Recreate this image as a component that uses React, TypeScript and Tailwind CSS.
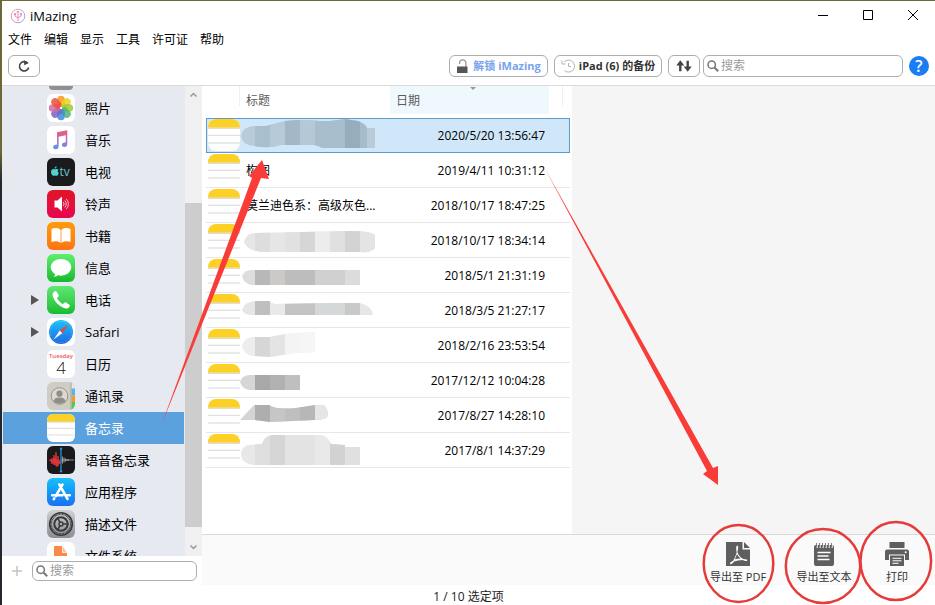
import type { ReactNode } from 'react';

const MENUS = ['文件', '编辑', '显示', '工具', '许可证', '帮助'];

function Tile({ className, children }: { className: string; children?: ReactNode }) {
  return (
    <span className={`block size-7 shrink-0 overflow-hidden rounded-md ${className}`}>
      <svg viewBox="0 0 28 28" className="size-7" aria-hidden="true">
        {children}
      </svg>
    </span>
  );
}

const PETALS = ['#f79a1c', '#e6d322', '#9fc93a', '#4fb573', '#3f8bdb', '#7e60c2', '#d06aa0', '#ee4c3c'];

function PhotosIcon() {
  return (
    <Tile className="bg-white">
      {PETALS.map((fill, i) => (
        <rect
          key={fill}
          x="10.200"
          y="1.800"
          width="7.600"
          height="11.200"
          rx="3.800"
          fill={fill}
          fillOpacity="0.850"
          transform={`rotate(${i * 45} 14 14)`}
        />
      ))}
    </Tile>
  );
}

function MusicIcon() {
  return (
    <Tile className="bg-white">
      <defs>
        <linearGradient id="music" x1="0" y1="0" x2="0" y2="1">
          <stop offset="0" stopColor="#f4586c" />
          <stop offset="0.55" stopColor="#b070cf" />
          <stop offset="1" stopColor="#4d9df0" />
        </linearGradient>
      </defs>
      <path
        d="M10 6.200 20.300 4.200V18a3 3 0 0 1-2.900 3.100c-1.500 0-2.500-.8-2.500-2 0-1.500 1.200-2.300 2.600-2.500l1.300-.3V9.200l-7.200 1.500v9.300a3 3 0 0 1-3 3.200c-1.500 0-2.500-.8-2.500-2 0-1.500 1.200-2.300 2.600-2.500l1.300-.3Z"
        fill="url(#music)"
      />
    </Tile>
  );
}

function TvIcon() {
  return (
    <Tile className="bg-[#1b1b1d]">
      <path
        d="M8.800 11.200c1-.5 2-.3 2.700.5-1.100.8-1 2.500.3 3.200-.5 1.500-1.300 2.900-2.300 2.900-.6 0-.9-.3-1.500-.3s-1 .3-1.500.3C5.200 17.800 4 15.700 4 14c0-2 1.300-3.100 2.700-3.100.7 0 1.300.4 2.100.3ZM7.700 10.600c0-1.300.8-2.200 1.900-2.400.1 1.300-.8 2.300-1.900 2.400Z"
        fill="#4fd3cf"
      />
      <text x="12.500" y="18" fontSize="12" fontFamily="Open Sans" fontWeight="500" fill="#5fc6c9">
        tv
      </text>
    </Tile>
  );
}

function RingtoneIcon() {
  return (
    <Tile className="bg-linear-to-b from-[#e11423] to-[#e8064f]">
      <path d="M7.500 10.500h3l4.500-4v15l-4.500-4h-3Z" fill="#fff" />
      <g fill="none" stroke="#fff" strokeWidth="0.900" strokeOpacity="0.800">
        <path d="M16.300 12a3 3 0 0 1 0 4" />
        <path d="M17.800 10.500a5 5 0 0 1 0 7" />
        <path d="M19.300 9a7 7 0 0 1 0 10" />
      </g>
    </Tile>
  );
}

function BooksIcon() {
  return (
    <Tile className="bg-linear-to-b from-[#ff9c08] to-[#fb7414]">
      <path
        d="M13.600 8C11.500 5.900 7.500 5.500 4.500 7v13c3-1.200 7-1 9.100 1ZM14.400 8c2.100-2.100 6.100-2.500 9.100-1v13c-3-1.200-7-1-9.100 1Z"
        fill="#fff"
      />
    </Tile>
  );
}

function MessagesIcon() {
  return (
    <Tile className="bg-linear-to-b from-[#5df070] to-[#12b92d]">
      <ellipse cx="14" cy="13.300" rx="10.300" ry="8.400" fill="#fff" />
      <path d="M8.500 18.500c0 1.800-.7 3.200-2 4.300 2.200 0 4-.8 5.200-2.200Z" fill="#fff" />
    </Tile>
  );
}

function PhoneIcon() {
  return (
    <Tile className="bg-linear-to-b from-[#5fe873] to-[#11bc2f]">
      <path
        d="M7.200 5.600c1-.9 1.900-.6 2.600.4l1.600 2.500c.6.900.4 1.700-.3 2.400l-.8.9c-.3.400-.3.700 0 1.200 1.300 1.900 2.800 3.500 4.700 4.800.5.300.9.300 1.200 0l.9-.9c.7-.7 1.500-.8 2.400-.2l2.500 1.700c1 .7 1.200 1.600.3 2.500-1.500 1.700-3.300 2-5.500 1.100-5-2.100-8.700-5.800-10.700-10.700-.9-2.300-.6-4.200 1.100-5.700Z"
        fill="#fff"
      />
    </Tile>
  );
}

function SafariIcon() {
  return (
    <Tile className="bg-white">
      <defs>
        <linearGradient id="safari" x1="0" y1="0" x2="0" y2="1">
          <stop offset="0" stopColor="#1bc4fb" />
          <stop offset="1" stopColor="#1d68e4" />
        </linearGradient>
      </defs>
      <circle cx="14" cy="14" r="12" fill="url(#safari)" />
      <circle cx="14" cy="14" r="10.500" fill="none" stroke="#fff" strokeOpacity="0.400" strokeDasharray="0.500 1.200" />
      <path d="M21.500 6.500 12.700 12.600l2.600 2.700Z" fill="#ef4437" />
      <path d="m6.500 21.500 6.200-8.900 2.600 2.700Z" fill="#f6f6f6" />
    </Tile>
  );
}

function CalendarIcon() {
  return (
    <span className="flex size-7 shrink-0 flex-col items-center overflow-hidden rounded-md bg-white" aria-hidden="true">
      <span className="h-2 text-[6px] leading-3 font-semibold text-[#f0525a]">Tuesday</span>
      <span className="text-[17px] leading-5 font-light text-[#222]">4</span>
    </span>
  );
}

function ContactsIcon() {
  return (
    <Tile className="bg-[#cfccc2]">
      <path d="M24.500 0H28v28h-3.500Z" fill="#e8e8e4" />
      <path d="M24.500 6.500H28v7h-3.500Z" fill="#57b6f0" />
      <path d="M24.500 13.500H28v6.500h-3.500Z" fill="#f79a2c" />
      <path d="M24.500 20H28v8h-3.500Z" fill="#4fcb54" />
      <path d="M24 0v28" stroke="#a9a79f" />
      <circle cx="12.500" cy="14" r="8.300" fill="#dcdad2" stroke="#97958c" />
      <circle cx="12.500" cy="11.700" r="3.100" fill="#8f8d86" />
      <path d="M6.500 19c1-3 3.300-3.500 6-3.500s5 .5 6 3.500c-3 3.700-9 3.700-12 0Z" fill="#8f8d86" />
    </Tile>
  );
}

function NotesArt() {
  return (
    <>
      <path d="M0 0h28v7.500H0Z" fill="#fdd025" />
      <path d="M0 8h28" stroke="#c9b26a" strokeWidth="0.600" />
      <path d="M0 14.300h28M0 21h28" stroke="#d8d8d8" strokeWidth="0.900" />
    </>
  );
}

function NotesIcon() {
  return (
    <Tile className="bg-white">
      <NotesArt />
    </Tile>
  );
}

function VoiceIcon() {
  return (
    <Tile className="bg-[#1a1a1c]">
      <path
        d="M2 14h2l1-2 1 4 1-7 1 10 1-13 1 15 1-11 1 7 1-3v4l-1-2-1 4-1-6-1 6-1-8-1 7-1-4-1 3-1-3Z"
        fill="#e6383b"
        stroke="#e6383b"
        strokeWidth="0.700"
      />
      <path d="M15.500 10.500v7M17 11.500v5M18.500 12.500v3M20 13v2M21.500 13.300v1.500" stroke="#a8a8a8" strokeWidth="0.900" />
      <path d="M14 14h13" stroke="#a8a8a8" strokeWidth="0.800" />
      <path d="M14 3v22" stroke="#2b8bd8" strokeWidth="1.300" />
      <circle cx="14" cy="2.800" r="1.200" fill="#2b8bd8" />
      <circle cx="14" cy="25.200" r="1.200" fill="#2b8bd8" />
    </Tile>
  );
}

function AppsIcon() {
  return (
    <Tile className="bg-linear-to-b from-[#1bc0fb] to-[#1c70f1]">
      <g stroke="#fff" strokeWidth="2.600" strokeLinecap="round" fill="none">
        <path d="M15.500 6.500 8.800 18M12.300 6.500 20.500 20.800M5.200 17.200h10.300M19.500 17.200h3.300M7.300 20.300l-.5.900" />
      </g>
    </Tile>
  );
}

function ProfilesIcon() {
  return (
    <Tile className="bg-linear-to-b from-[#d0d1d3] to-[#8b8c90]">
      <g fill="none" stroke="#39393b">
        <circle cx="14" cy="14" r="11.300" strokeWidth="1.600" />
        <circle cx="14" cy="14" r="9.700" strokeWidth="1.300" strokeDasharray="0.900 0.600" />
        <circle cx="14" cy="14" r="6.700" strokeWidth="2" />
        <circle cx="14" cy="14" r="2" strokeWidth="1.400" />
        <path d="M16 14h5.500M13 12.300l-2.800-4.800M13 15.700l-2.800 4.800" strokeWidth="1.500" />
      </g>
    </Tile>
  );
}

function FilesIcon() {
  return (
    <Tile className="bg-white">
      <path d="M7 4h8v7h5v13H7Z" fill="#f98a4a" />
      <path d="M15.500 4 20 10.500h-4.500Z" fill="#f7c3a2" />
    </Tile>
  );
}

const ITEMS: { label: string; icon: ReactNode; expandable?: boolean; selected?: boolean }[] = [
  { label: '照片', icon: <PhotosIcon /> },
  { label: '音乐', icon: <MusicIcon /> },
  { label: '电视', icon: <TvIcon /> },
  { label: '铃声', icon: <RingtoneIcon /> },
  { label: '书籍', icon: <BooksIcon /> },
  { label: '信息', icon: <MessagesIcon /> },
  { label: '电话', icon: <PhoneIcon />, expandable: true },
  { label: 'Safari', icon: <SafariIcon />, expandable: true },
  { label: '日历', icon: <CalendarIcon /> },
  { label: '通讯录', icon: <ContactsIcon /> },
  { label: '备忘录', icon: <NotesIcon />, selected: true },
  { label: '语音备忘录', icon: <VoiceIcon /> },
  { label: '应用程序', icon: <AppsIcon /> },
  { label: '描述文件', icon: <ProfilesIcon /> },
  { label: '文件系统', icon: <FilesIcon /> },
];

/* A redacted title: an outline that clips a strip of flat blocks, each [x, width, colour]. */
type Mosaic = { outline: string; base: string; blocks: [number, number, string][] };

const NOTES: { title?: string; date: string; mosaic?: Mosaic; selected?: boolean }[] = [
  {
    date: '2020/5/20 13:56:47',
    selected: true,
    mosaic: {
      outline: 'M1 18Q2 9 14 8L26 8 45 3Q60 1 80 3L90 3 105 1 118 3Q126 6 127 10L135 10V30H82Q76 26 64 27L40 27Q30 31 14 28 2 27 1 18Z',
      base: '#b9cbd8',
      blocks: [[15, 15, '#a9bfcf'], [30, 15, '#b6cad8'], [45, 15, '#a3b7c6'], [60, 15, '#b4c8d6'], [75, 30, '#a9becd'], [105, 15, '#97adbd'], [120, 7, '#a7bccb']],
    },
  },
  { title: '构图', date: '2019/4/11 10:31:12' },
  { title: '莫兰迪色系：高级灰色...', date: '2018/10/17 18:47:25' },
  {
    date: '2018/10/17 18:34:14',
    mosaic: {
      outline: 'M4 19Q6 10 15 10L110 8Q130 8 135 12V25Q132 30 120 29L30 29Q8 30 4 19Z',
      base: '#e6e6e6',
      blocks: [[15, 15, '#dddddd'], [45, 15, '#e1e1e1'], [60, 15, '#d6d6d6'], [75, 15, '#ececec'], [90, 15, '#e0e0e0'], [105, 15, '#d3d3d3'], [120, 15, '#e4e4e4']],
    },
  },
  {
    date: '2018/5/1 21:31:19',
    mosaic: {
      outline: 'M2 18Q4 12 12 12H120V27H12Q4 26 2 18Z',
      base: '#dddddd',
      blocks: [[15, 15, '#b8b8b8'], [30, 15, '#cbcac6'], [45, 30, '#bdbdbd'], [75, 30, '#d0d0d0'], [105, 15, '#dcdcdc']],
    },
  },
  {
    date: '2018/3/5 21:27:17',
    mosaic: {
      outline: 'M2 17Q4 9 15 8H29L34 11 90 10H120Q132 13 133 22H12Q4 22 2 17Z',
      base: '#e6e6e6',
      blocks: [[15, 15, '#bfbfbf'], [30, 15, '#e9e9e9'], [45, 30, '#c3c3c3'], [75, 30, '#d5d8d9'], [105, 15, '#c9c9c9']],
    },
  },
  {
    date: '2018/2/16 23:53:54',
    mosaic: {
      outline: 'M2 18Q4 10 12 9L30 9 45 6 75 4V24L55 25 30 29 12 28Q4 26 2 18Z',
      base: '#ededed',
      blocks: [[15, 15, '#d6d6d6'], [30, 15, '#e4e4e4'], [45, 15, '#f4f4f4'], [60, 15, '#f6f6f6']],
    },
  },
  {
    date: '2017/12/12 10:04:28',
    mosaic: {
      outline: 'M0 19Q2 12 10 12H60V27H10Q2 26 0 19Z',
      base: '#d6d6d6',
      blocks: [[15, 15, '#a8a8a8'], [30, 15, '#b1b1b1'], [45, 15, '#bfbfbf']],
    },
  },
  {
    date: '2017/8/27 14:28:10',
    mosaic: {
      outline: 'M0 22 14 7H29Q36 12 56 10L75 7H84Q90 14 87 19 84 22 75 22L30 24 15 22Z',
      base: '#d4d4d4',
      blocks: [[15, 15, '#aeaeae'], [30, 15, '#c6c6c6'], [45, 15, '#bfbfbf'], [60, 15, '#b7b7b7'], [75, 15, '#e6e6e6']],
    },
  },
  {
    date: '2017/8/1 14:37:29',
    mosaic: {
      outline: 'M1 22Q1 14 8 12L22 11Q24 3 32 2H80Q88 3 91 11L105 12V14H120V32H15Q2 31 1 22Z',
      base: '#e8e8e8',
      blocks: [[15, 15, '#dedede'], [30, 15, '#d5d5d5'], [45, 30, '#e3e3e3'], [75, 15, '#e9e9e9'], [90, 15, '#d2d2d2'], [105, 15, '#e0e0e0']],
    },
  },
];

function Redacted({ mosaic, id }: { mosaic: Mosaic; id: string }) {
  return (
    <svg viewBox="0 0 150 34" className="block h-[34px] w-[150px]" aria-hidden="true">
      <clipPath id={id}>
        <path d={mosaic.outline} />
      </clipPath>
      <g clipPath={`url(#${id})`} shapeRendering="crispEdges">
        <rect width="150" height="34" fill={mosaic.base} />
        {mosaic.blocks.map(([x, w, fill]) => (
          <rect key={x} x={x} width={w} height="34" fill={fill} />
        ))}
      </g>
    </svg>
  );
}

function SearchGlyph() {
  return (
    <svg viewBox="0 0 12 12" className="size-3 shrink-0" fill="none" stroke="#777" aria-hidden="true">
      <circle cx="4.700" cy="4.700" r="3.700" strokeWidth="1.500" />
      <path d="m7.500 7.500 3.700 3.700" strokeWidth="2" />
    </svg>
  );
}

function SearchBox({ label, className }: { label: string; className: string }) {
  return (
    <label className={`flex items-center gap-0.5 rounded-md border border-[#adadad] bg-white pr-2 pl-[3px] ${className}`}>
      <SearchGlyph />
      <input
        type="text"
        aria-label={label}
        placeholder="搜索"
        className="w-full min-w-0 bg-transparent text-xs leading-4 outline-none placeholder:text-[#9b9b9b]"
      />
    </label>
  );
}

function TitleBar() {
  return (
    <header className="flex h-7 shrink-0 items-center justify-between">
      <div className="flex items-center gap-1 pt-0.5 pl-2">
        <svg viewBox="0 0 16 16" className="size-4" fill="none" aria-hidden="true">
          <defs>
            <linearGradient id="logo" x1="0" y1="0" x2="1" y2="1">
              <stop offset="0" stopColor="#f09ab8" />
              <stop offset="1" stopColor="#8fa6ee" />
            </linearGradient>
          </defs>
          <circle cx="8" cy="8" r="6.800" stroke="url(#logo)" />
          <path d="M8 3.500V13M5 5.500V8l3 2M11 5.500V8l-3 2M6.500 4.500 8 3l1.500 1.500" stroke="#e58bb5" />
          <circle cx="5" cy="6" r="1" fill="#ee7f9f" />
          <circle cx="11" cy="6" r="1" fill="#c58be0" />
        </svg>
        <h1 className="text-[13px] leading-4 text-black">iMazing</h1>
      </div>
      <div className="flex h-full">
        {[
          ['最小化', 'M0 5.500h10'],
          ['最大化', 'M.5.500h9v9h-9Z'],
          ['关闭', 'm0 0 10 10M10 0 0 10'],
        ].map(([name, d]) => (
          <button key={name} type="button" aria-label={name} className="flex h-full w-[45px] items-center justify-center">
            <svg viewBox="0 0 10 10" className="size-2.5" fill="none" stroke="#000" aria-hidden="true">
              <path d={d} />
            </svg>
          </button>
        ))}
      </div>
    </header>
  );
}

const TOOL = 'flex h-[22px] shrink-0 items-center justify-center rounded-md border border-[#adadad] bg-white';

function Toolbar() {
  return (
    <div className="flex shrink-0 items-center gap-1.5 border-b border-[#dcdcdc] pt-1 pr-1.5 pb-2 pl-1.5">
      <button type="button" aria-label="刷新" className={`${TOOL} mr-auto w-8`}>
        <svg viewBox="0 0 14 14" className="size-3.5" fill="none" stroke="#444" strokeWidth="1.600" aria-hidden="true">
          <path d="M10.500 4A4.700 4.700 0 1 0 11.700 8.500" />
          <path d="M7 1.200 11.800 4 7.200 6.300Z" fill="#444" stroke="none" />
        </svg>
      </button>
      <button type="button" className={`${TOOL} w-[99px] gap-1 text-[11px] font-bold text-[#78a3ee]`}>
        <svg viewBox="0 0 13 15" className="h-[15px] w-[13px]" aria-hidden="true">
          <path d="M3.500 5V4a3.200 3.200 0 0 1 6.400 0v4" fill="none" stroke="#999" strokeWidth="1.300" />
          <path d="M1 7.500h10.500V14H1Z" fill="#555" />
        </svg>
        <span className="whitespace-nowrap">解锁 iMazing</span>
      </button>
      <button type="button" className={`${TOOL} w-[108px] gap-1 text-[11px] font-bold text-[#333]`}>
        <svg viewBox="0 0 14 14" className="size-3.5" fill="none" stroke="#b5b5b5" aria-hidden="true">
          <path d="M3 3.200A6 6 0 1 1 3.500 11.500" />
          <path d="M1 1.500v3.500h3.500" />
          <path d="M7.500 4v3.500H10" />
        </svg>
        <span className="whitespace-nowrap">iPad (6) 的备份</span>
      </button>
      <div className="flex items-center gap-[3px]">
        <button type="button" aria-label="传输" className={`${TOOL} w-8`}>
          <svg viewBox="0 0 16 12" className="h-3 w-4" fill="#444" aria-hidden="true">
            <path d="M4.300.300 8.300 5.500H5.500v5.700H3.100V5.500H.300ZM11.700 11.700 7.700 6.500h2.800V.800h2.400v5.700h2.800Z" />
          </svg>
        </button>
        <SearchBox label="搜索备份" className="h-[22px] w-[200px]" />
      </div>
      <button
        type="button"
        aria-label="帮助"
        className="flex size-5 shrink-0 items-center justify-center rounded-full bg-[#1a7df3] text-base leading-5 font-semibold text-white"
      >
        ?
      </button>
    </div>
  );
}

function Sidebar() {
  return (
    <aside className="flex w-[200px] shrink-0 flex-col">
      <div className="flex min-h-0 flex-1">
        <div className="flex-1 overflow-hidden bg-[#e6e9f0]">
          <div className="h-1.5 pl-[47px]">
            <div className="h-1 w-6 rounded-b-md bg-[#8e8e93]" />
          </div>
          <ul>
            {ITEMS.map((item) => (
              <li key={item.label} className="px-px">
                <button
                  type="button"
                  aria-current={item.selected ? 'page' : undefined}
                  className={`flex h-8 w-full items-center text-[13px] leading-5 ${
                    item.selected ? 'bg-[#5ba1de] text-white' : 'text-black'
                  }`}
                >
                  <span className="flex w-11 justify-end pr-2">
                    {item.expandable && (
                      <svg viewBox="0 0 8 10" className="h-2.5 w-2" fill="#555" aria-hidden="true">
                        <path d="M0 0l8 5-8 5Z" />
                      </svg>
                    )}
                  </span>
                  {item.icon}
                  <span className="pl-2.5">{item.label}</span>
                </button>
              </li>
            ))}
          </ul>
        </div>
        <div className="flex w-[17px] flex-col items-center bg-[#f0f0f0]" aria-hidden="true">
          <svg viewBox="0 0 17 17" className="size-[17px] shrink-0" fill="none" stroke="#999" strokeWidth="1.500">
            <path d="m5.500 10.500 3-3 3 3" />
          </svg>
          <div className="flex-[100_1_0%]" />
          <div className="w-full flex-[324_1_0%] bg-[#cdcdcd]" />
          <div className="flex-[12_1_0%]" />
          <svg viewBox="0 0 17 17" className="size-[17px] shrink-0" fill="none" stroke="#999" strokeWidth="1.500">
            <path d="m5.500 6.500 3 3 3-3" />
          </svg>
        </div>
      </div>
      <div className="flex h-[29px] shrink-0 items-center gap-2.5 pr-[5px] pl-[9px]">
        <button type="button" aria-label="添加" className="flex size-[11px] items-center justify-center">
          <svg viewBox="0 0 10 10" className="size-2.5" stroke="#c4c4c4" strokeWidth="1.500" aria-hidden="true">
            <path d="M5 0v10M0 5h10" />
          </svg>
        </button>
        <SearchBox label="搜索侧栏" className="h-5 flex-1" />
      </div>
    </aside>
  );
}

function NoteTable() {
  return (
    <div className="w-[370px] shrink-0 overflow-hidden bg-white pr-0.5 pl-1">
      <table className="w-full table-fixed border-separate border-spacing-0 text-xs">
        <colgroup>
          <col className="w-[34px]" />
          <col className="w-[150px]" />
          <col className="w-[159px]" />
          <col />
        </colgroup>
        <thead>
          <tr className="h-8 text-left align-top leading-[30px] text-[#5c5c5c]">
            <th className="p-0" aria-label="图标">
              <div className="h-5 border-r border-[#f0f0f0]" />
            </th>
            <th className="p-0 pl-1.5 font-normal">标题</th>
            <th className="p-0 font-normal" aria-sort="descending">
              <div className="flex h-7 items-start justify-between bg-[#eff8fc] pl-1.5">
                <span>日期</span>
                <svg viewBox="0 0 6 3" className="mt-px h-[3px] w-1.5" fill="#999" aria-hidden="true">
                  <path d="M0 0h6L3 3Z" />
                </svg>
                <span className="w-6" />
              </div>
            </th>
            <th className="p-0" aria-label="其他">
              <div className="h-5 w-3.5 border-r border-[#f0f0f0]" />
            </th>
          </tr>
        </thead>
        <tbody>
          {NOTES.map((note) => {
            const line = note.selected ? 'border-transparent' : 'border-[#e7e7e7]';
            return (
              <tr
                key={note.date}
                aria-selected={note.selected}
                className={`h-[35px] text-black ${
                  note.selected ? 'bg-[#cfe7f8] outline-1 -outline-offset-1 outline-[#5c9ccc]' : ''
                }`}
              >
                <td className={`border-b p-0 pl-0.5 ${line}`}>
                  <svg viewBox="0 0 28 28" className="block size-8 rounded-lg bg-white" aria-hidden="true">
                    <NotesArt />
                  </svg>
                </td>
                <td className={`border-b p-0 ${line}`}>
                  {note.mosaic ? (
                    <Redacted mosaic={note.mosaic} id={`note-${note.date.replace(/\D/g, '')}`} />
                  ) : (
                    <span className="block truncate pt-0.5 pl-1.5">{note.title}</span>
                  )}
                </td>
                <td className={`border-b p-0 pt-0.5 pr-1 text-right ${line}`}>{note.date}</td>
                <td className={`border-b p-0 ${line}`} />
              </tr>
            );
          })}
        </tbody>
      </table>
    </div>
  );
}

function ExportBar() {
  const button = 'flex flex-col items-center gap-[3px] text-[11px] leading-4 text-[#333]';
  return (
    <div className="flex h-[51px] shrink-0 justify-end border-t border-[#d9d9d9] bg-[#fafafa] pt-[7px] pr-2">
      <button type="button" className={`${button} w-[86px]`}>
        <svg viewBox="0 0 24 24" className="size-6" aria-hidden="true">
          <path d="M0 0h16.500v7.500H24V24H0Z" fill="#5f5f5f" />
          <path d="M18 0v6h6Z" fill="#5f5f5f" />
          <path
            d="M11.300 3.500c1.300 0 1 3.500.1 6.500 1.300 3.500 3.500 6 6 7 3 .3 4 .5 4 1.300 0 1.200-2.500.7-4.700-.4-3.300.2-6 .6-8.700 1.500-1.700 2.500-3.400 3.300-4 2.500-.6-.8 1-2.200 3.200-3.200 1.500-2.500 2.700-5.300 3.500-8.300-.8-3.300-.6-6.900.6-6.900ZM11 12c-.6 2-1.300 3.700-2.200 5.300 1.900-.5 3.800-.8 5.800-.9-1.500-1.200-2.700-2.700-3.600-4.400Z"
            fill="#fff"
          />
        </svg>
        导出至 PDF
      </button>
      <button type="button" className={`${button} w-[86px]`}>
        <svg viewBox="0 0 24 24" className="size-6" aria-hidden="true">
          <rect x="2" y="3" width="20" height="21" rx="2" fill="#5f5f5f" />
          <path d="M5 1v5M8 1v5M11 1v5M14 1v5M17 1v5M20 1v5" stroke="#fafafa" strokeWidth="1.400" />
          <path d="M4.500 1v4.500M7.500 1v4.500M10.500 1v4.500M13.500 1v4.500M16.500 1v4.500M19.500 1v4.500" stroke="#5f5f5f" strokeWidth="0.800" />
          <path d="M5.500 10.500h13M5.500 14h11M5.500 17.500h12" stroke="#fff" strokeWidth="1.300" />
        </svg>
        导出至文本
      </button>
      <button type="button" className={`${button} w-[60px]`}>
        <svg viewBox="0 0 24 24" className="size-6" aria-hidden="true">
          <path d="M4.500 0h15v6h-15Z" fill="#5f5f5f" />
          <path d="M2 7.500h20a2 2 0 0 1 2 2V18h-4v-5.500H4V18H0V9.500a2 2 0 0 1 2-2Z" fill="#5f5f5f" />
          <circle cx="20.700" cy="10.300" r="1" fill="#fff" />
          <path d="M5 13.500h14V24H5Z" fill="#5f5f5f" />
          <path d="M7.500 16.300h9M7.500 18.800h9M7.500 21.300h6" stroke="#fff" />
        </svg>
        打印
      </button>
    </div>
  );
}

/* Hand-drawn arrows and rings that float above the window. */
function Annotations() {
  return (
    <svg
      viewBox="0 0 935 605"
      className="pointer-events-none absolute top-0 left-0 h-[605px] w-[935px]"
      aria-hidden="true"
    >
      <g fill="#f93c38">
        <path d="M161 426 252 178 249 176 262 160 269 179 261 178Z" />
        <path d="M544 167 707 471 703 474 718 485 718 466 713 468Z" />
      </g>
      <g fill="none" stroke="#e53c3a" strokeWidth="2.500">
        <ellipse cx="738.500" cy="563.500" rx="34.800" ry="38.500" />
        <ellipse cx="823" cy="566" rx="37.200" ry="37" />
        <ellipse cx="895.800" cy="561" rx="35.300" ry="39" />
      </g>
    </svg>
  );
}

export default function App() {
  return (
    <div className="relative h-screen overflow-hidden bg-linear-to-b from-[#6d6838] from-25% to-[#25272e] to-30% pt-px pl-0.5 font-['Open_Sans','Noto_Sans_CJK_SC',sans-serif]">
      <div className="flex h-full flex-col bg-white">
        <TitleBar />
        <nav className="flex h-[22px] shrink-0 items-center gap-3 pl-1.5 text-xs leading-4 text-black">
          {MENUS.map((menu) => (
            <button key={menu} type="button">
              {menu}
            </button>
          ))}
        </nav>
        <Toolbar />
        <div className="flex min-h-0 flex-1">
          <Sidebar />
          <main className="flex min-w-0 flex-1 flex-col">
            <div className="flex min-h-0 flex-1">
              <NoteTable />
              <section aria-label="预览" className="flex-1 bg-[#f5f5f5]" />
            </div>
            <ExportBar />
          </main>
        </div>
        <footer className="h-5 shrink-0 pt-1 text-center text-xs leading-4 text-[#222]">1 / 10 选定项</footer>
      </div>
      <Annotations />
    </div>
  );
}
